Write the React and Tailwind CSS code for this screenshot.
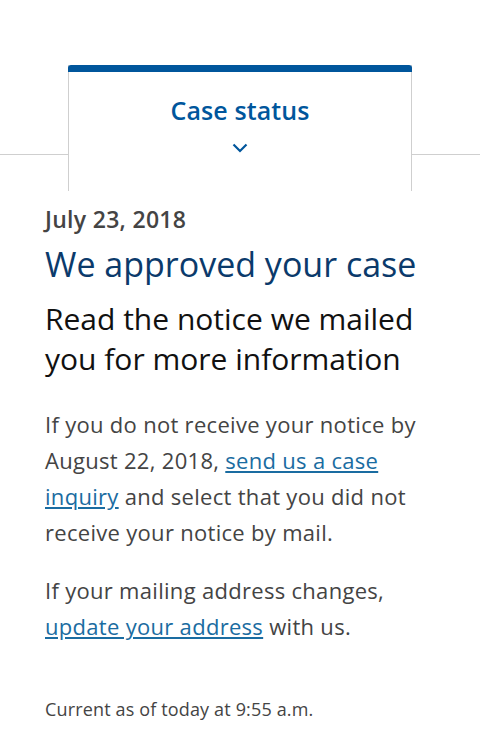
import React from 'react';

function Chevron() {
  return (
    <svg width="16" height="10" viewBox="0 0 16 10" fill="none" className="mx-auto">
      <path d="M1.5 1.5L8 8L14.5 1.5" stroke="#00569c" strokeWidth="2.2" />
    </svg>
  );
}

export default function App() {
  return (
    <div className="w-[480px] h-[740px] bg-white overflow-hidden" style={{ fontFamily: '"Open Sans", sans-serif' }}>
      {/* tab header */}
      <div className="relative pt-[65px]">
        <div className="absolute left-0 right-0 top-[154px] border-t border-[#cfcfcf]" />
        <div className="relative mx-[68px] h-[126px] bg-white border-x border-[#cfcfcf]">
          <div className="h-[7px] -mx-px rounded-t-[3px] bg-[#00569c]" />
          <div className="pt-[20px] text-center text-[25px] leading-[36px] font-semibold tracking-[0.1px] text-[#00569c]">Case status</div>
          <div className="pt-[15px]">
            <Chevron />
          </div>
        </div>
      </div>

      {/* case details */}
      <div className="px-[45px] pt-[14px]">
        <p className="text-[23px] leading-[28px] font-semibold tracking-[0.3px] text-[#444]">July 23, 2018</p>
        <h1 className="mt-[9px] text-[34px] leading-[44px] text-[#0b3a6b]">We approved your case</h1>
        <h2 className="mt-[13px] text-[30px] leading-[40px] text-[#111]">
          Read the notice we mailed you for more information
        </h2>
        <p className="mt-[27px] text-[22px] leading-[36px] tracking-[0.3px] text-[#444]">
          If you do not receive your notice by August 22, 2018,{' '}
          <a href="#" className="text-[#1a6ca1] underline">send us a case inquiry</a> and select that you did not
          receive your notice by mail.
        </p>
        <p className="mt-[22px] text-[22px] leading-[36px] tracking-[0.3px] text-[#444]">
          If your mailing address changes,{' '}
          <a href="#" className="text-[#1a6ca1] underline">update your address</a> with us.
        </p>
        <p className="mt-[53px] text-[18px] leading-[24px] tracking-[0.15px] text-[#444]">Current as of today at 9:55 a.m.</p>
      </div>
    </div>
  );
}
